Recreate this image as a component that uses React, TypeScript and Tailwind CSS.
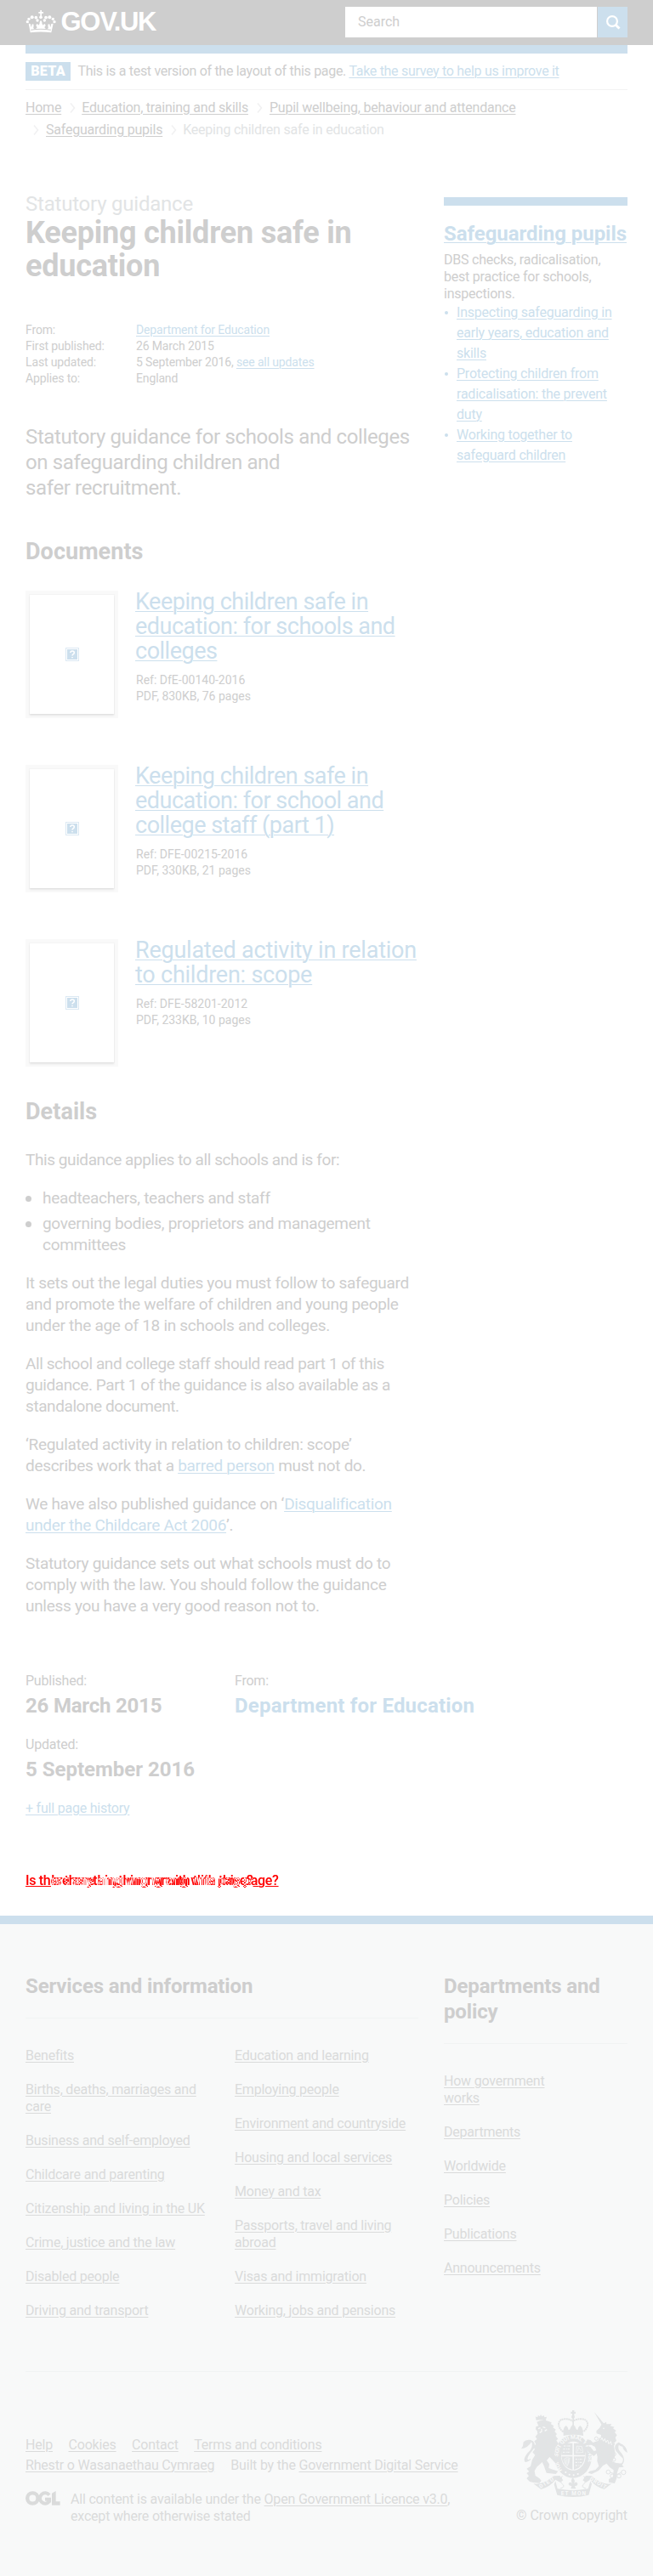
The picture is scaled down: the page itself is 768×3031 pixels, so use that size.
import type { ReactNode } from 'react';

const link = 'text-[#ccdfed] underline decoration-1 underline-offset-2';

function A({ children, className = link }: { children: ReactNode; className?: string }) {
  return (
    <a href="#" className={className}>
      {children}
    </a>
  );
}

function Lines({ lines }: { lines: ReactNode[] }) {
  return (
    <>
      {lines.map((line, i) => (
        <span key={i} className="block whitespace-nowrap">
          {line}
        </span>
      ))}
    </>
  );
}

function Crown() {
  return (
    <svg viewBox="90 36 108 80" className="h-[26.7px] w-[36px]" fill="#fff">
      <path d="M101 83 L107 84 L110 96 Q113 92 112 86 L118 85 L119 92 Q116 97 119 101 Q125 104 130 99 Q132 94 127 91 L129 85 Q134 85 136 89 Q141 84 140 78 L144 71 L148 78 Q147 84 152 89 Q154 85 159 85 L161 91 Q156 94 158 99 Q163 104 169 101 Q172 97 169 92 L170 85 L176 86 Q175 92 178 96 L181 84 L188 83 L181 115 Q144 110 107 115 Z" />
      <path d="M108 104 Q144 98 180 104 L179 107 Q144 101 109 107 Z" fill="#cecece" />
      <path d="M142 36 h5 v6 h6 v5 h-6 v12 h-5 v-12 h-6 v-5 h6 Z" />
      <circle cx="144" cy="61" r="5.5" />
      <circle cx="97" cy="77" r="5" />
      <circle cx="102" cy="67" r="5" />
      <circle cx="113" cy="61" r="6" />
      <circle cx="127" cy="62" r="5.5" />
      <circle cx="132" cy="72" r="5" />
      <circle cx="157" cy="72" r="5" />
      <circle cx="162" cy="62" r="5.5" />
      <circle cx="175" cy="61" r="6" />
      <circle cx="187" cy="67" r="5" />
      <circle cx="192" cy="77" r="5" />
    </svg>
  );
}

function Chevron({ className }: { className: string }) {
  return (
    <svg viewBox="0 0 7 12" className={`h-3 w-[7px] shrink-0 ${className}`} fill="none">
      <path d="M1 .5 L5.5 6 L1 11.5" stroke="#f1f1f2" strokeWidth="1.6" />
    </svg>
  );
}

function BrokenImage() {
  return (
    <svg viewBox="0 0 16 16" className="size-4">
      <rect x=".5" y=".5" width="15" height="15" fill="#fff" stroke="#dce9f3" />
      <rect x="2" y="2" width="12" height="12" fill="#ccdfed" />
      <path d="M5.8 6 Q6 4 8 4 Q10.300 4 10.300 6 Q10.300 7.200 9 7.800 Q8 8.300 8 9.600 M8 11 v1.300" stroke="#fff" strokeWidth="1.500" fill="none" />
    </svg>
  );
}

function Crest() {
  const bg = '#f8f9f9';
  return (
    <svg viewBox="69 78 375 306" className="h-[102px] w-[125px]" fill="#e2e4e5">
      {/* crown */}
      <path d="M249 78 h7 v5 h5 v7 h-5 v6 h-7 v-6 h-5 v-7 h5 Z" />
      <circle cx="252" cy="101" r="6" />
      <path d="M217 154 C192 134 199 109 222 109 Q240 108 251 117 Q263 108 282 109 C306 109 312 134 288 154" fill="none" stroke="#e2e4e5" strokeWidth="6" strokeDasharray="6 1.500" />
      <path d="M250 105 h5 v42 h-5 Z" />
      <path d="M216 152 l5 -14 l6 -6 l6 6 l3 10 l5 -3 l4 -10 l7 -7 l7 7 l4 10 l5 3 l3 -10 l6 -6 l6 6 l5 14 l-3 11 q-33 -8 -66 0 Z" />
      <path d="M218 160 q35 -9 70 0 v8 q-35 -7 -70 0 Z" />
      {/* garter and shield */}
      <ellipse cx="252" cy="241" rx="66" ry="76" />
      <ellipse cx="253" cy="239" rx="43" ry="51" fill={bg} />
      <path d="M216 194 h34 v42 h-39 q-1 -28 5 -42 Z M255 194 h34 q7 16 5 42 h-39 Z M211 241 h39 v47 q-35 -8 -39 -47 Z M255 241 h39 q-4 39 -39 47 Z" />
      <path d="M219 204 h25 M217 215 h27 M216 226 h28 M260 251 h28 M260 262 h25 M260 273 h20" stroke={bg} strokeWidth="3" strokeDasharray="7 4 3 2" />
      <path d="M263 228 L265 204 L283 206 L287 227 Z M268 223 l4 -14 l9 13 M220 252 q6 -10 20 -5 q-2 20 -9 28 q-10 -9 -11 -23 M226 251 v17 M231 249 v22 M236 249 v15" fill="none" stroke={bg} strokeWidth="2" />
      <path id="garter" d="M214 289 A54 65 0 1 1 292 289" fill="none" />
      <text fill={bg} className="font-[Roboto] text-[20px] font-bold">
        <textPath href="#garter" textLength="252">HONI SOIT QUI MAL Y PENSE</textPath>
      </text>
      <g fill={bg}>
        <circle cx="226" cy="297" r="3" />
        <circle cx="239" cy="305" r="3" />
        <circle cx="254" cy="307" r="3" />
        <circle cx="269" cy="303" r="3" />
      </g>
      {/* lion */}
      <path d="M122 113 l-3 -13 l7 3 l3 -7 l6 4 l3 -8 l4 8 l7 -4 l2 7 l8 -2 l-4 15 q-16 -6 -33 -3 Z" />
      <path d="M124 119 Q143 109 166 117 L176 121 L174 127 L184 133 L181 139 L191 146 L187 153 L195 162 L190 168 L199 179 L193 184 L200 196 L190 210 L186 236 L207 250 L191 266 L178 252 L169 243 L159 255 L168 268 L166 282 L183 288 L199 293 L191 303 L158 299 L149 274 L143 261 L124 278 L116 292 L119 309 L133 318 L140 326 L134 335 L112 333 L99 330 L88 319 L96 310 L88 300 L97 294 L88 284 L102 276 L108 253 L118 236 L109 226 L117 216 L111 205 L121 198 L115 187 L125 180 L119 171 L127 161 L125 151 L120 145 L121 136 L130 133 Z" />
      <path d="M129 143 l8 -3 M145 137 l9 3 M141 143 v10 l-7 4 M152 151 l8 -5" stroke={bg} strokeWidth="4" fill="none" />
      <path d="M102 253 Q78 271 80 249 Q84 235 101 219 Q116 197 99 184 L110 186 Q123 201 111 217 Q92 239 91 250 Q93 257 102 248 Z" />
      <path d="M105 190 Q93 211 69 214 Q77 205 77 190 Q86 179 105 183 Z" />
      {/* unicorn */}
      <path d="M326 83 L361 125 L353 130 Z" />
      <path d="M352 129 L369 119 L370 127 L388 126 L383 133 L398 137 L393 142 L404 150 L399 156 L407 166 L401 174 L405 185 L398 193 L374 190 L349 181 L351 165 L335 160 L334 151 L345 141 Z" />
      <circle cx="360" cy="142" r="2.500" fill={bg} />
      <path d="M337 187 Q353 183 396 204 L400 225 L399 244 L389 258 L404 264 L422 267 L431 278 L414 280 L407 300 L406 317 L399 336 L378 332 L378 321 L393 313 L395 289 L382 280 L370 266 L357 274 L342 291 L318 303 L305 299 L310 293 L331 288 L343 275 L337 257 L338 242 L335 230 L325 240 L309 227 L300 216 L301 206 L313 207 L325 222 L334 220 L329 207 L317 200 L300 201 L298 192 L302 181 L313 183 L322 192 Z" />
      <path d="M345 175 Q374 183 400 195 L395 206 Q366 191 340 187 Z" />
      <path d="M350 183 l4 -8 l5 12 l5 -9 l4 14 l6 -9 l4 14 l7 -9 l3 13" stroke={bg} strokeWidth="3" fill="none" />
      <path d="M407 265 Q431 271 428 248 Q415 236 403 221 Q393 201 412 191 L419 194 Q405 205 417 223 Q436 242 431 260 Q424 279 406 270 Z" />
      <path d="M416 194 Q440 201 444 228 Q427 218 427 206 Q418 207 409 195 Z" />
      <g fill="none" stroke="#e2e4e5" strokeWidth="3">
        <circle cx="334" cy="178" r="6" />
        <circle cx="397" cy="233" r="6" />
        <circle cx="396" cy="252" r="6" />
        <circle cx="376" cy="296" r="7" />
        <circle cx="390" cy="310" r="7" />
        <circle cx="414" cy="310" r="7" />
        <circle cx="430" cy="297" r="8" />
        <path d="M382 297 L394 301 L408 304 L422 298" />
      </g>
      {/* motto scroll */}
      <path d="M112 337 Q145 343 184 310 L205 309 L217 325 L207 333 L190 323 Q170 348 139 357 Z" />
      <path d="M388 337 Q354 343 317 310 L297 309 L286 325 L297 333 L312 323 Q331 348 362 357 Z" />
      <path d="M190 328 L197 355 Q252 366 305 355 L313 328 L318 338 L307 377 Q252 391 196 377 L185 339 Z" />
      <path d="M214 310 Q200 330 218 342 Q222 350 207 354 M290 310 Q304 330 286 342 Q282 350 297 354" fill="none" stroke="#e2e4e5" strokeWidth="3" />
      <path d="M251 316 q12 12 3 22 q9 -12 14 -1 q0 10 -10 8 l4 10 h-18 l3 -10 q-12 0 -11 -9 q6 -9 14 2 q-9 -11 1 -22 Z" />
      <g fill={bg} className="font-[Roboto] text-[19px] font-bold">
        <text x="137" y="354" transform="rotate(-31 137 354)" textLength="56">DIEU</text>
        <text x="209" y="379" textLength="88">ET MON</text>
        <text x="309" y="324" transform="rotate(30 309 324)" textLength="64">DROIT</text>
      </g>
    </svg>
  );
}

function OglLogo() {
  return (
    <svg viewBox="0 0 123 51" className="h-[17px] w-[41px]" fill="none" stroke="#dadbdb">
      <circle cx="25" cy="25.500" r="18.500" strokeWidth="13" />
      <path d="M84 14 A18.500 18.500 0 1 0 84 37 V29 H69" strokeWidth="12" />
      <path d="M93 8 L107 0 V37 H122 V50 H93 Z" fill="#dadbdb" stroke="none" />
    </svg>
  );
}

const documents = [
  {
    title: ['Keeping children safe in', 'education: for schools and', 'colleges'],
    meta: ['Ref: DfE-00140-2016', 'PDF, 830KB, 76 pages'],
    tracking: 'tracking-[-0.5px]',
  },
  {
    title: ['Keeping children safe in', 'education: for school and', 'college staff (part 1)'],
    meta: ['Ref: DFE-00215-2016', 'PDF, 330KB, 21 pages'],
    tracking: 'tracking-[-0.5px]',
  },
  {
    title: ['Regulated activity in relation', 'to children: scope'],
    meta: ['Ref: DFE-58201-2012', 'PDF, 233KB, 10 pages'],
    tracking: 'tracking-[-0.23px]',
  },
];

const related = [
  ['Inspecting safeguarding in', 'early years, education and', 'skills'],
  ['Protecting children from', 'radicalisation: the prevent', 'duty'],
  ['Working together to', 'safeguard children'],
];

const services = [
  [
    ['Benefits'],
    ['Births, deaths, marriages and', 'care'],
    ['Business and self-employed'],
    ['Childcare and parenting'],
    ['Citizenship and living in the UK'],
    ['Crime, justice and the law'],
    ['Disabled people'],
    ['Driving and transport'],
  ],
  [
    ['Education and learning'],
    ['Employing people'],
    ['Environment and countryside'],
    ['Housing and local services'],
    ['Money and tax'],
    ['Passports, travel and living', 'abroad'],
    ['Visas and immigration'],
    ['Working, jobs and pensions'],
  ],
];

const departments = [
  ['How government', 'works'],
  ['Departments'],
  ['Worldwide'],
  ['Policies'],
  ['Publications'],
  ['Announcements'],
];

function FooterList({ items, className }: { items: string[][]; className: string }) {
  return (
    <ul className={`flex flex-col gap-5 ${className}`}>
      {items.map((lines) => (
        <li key={lines[0]}>
          <A className="underline decoration-1 underline-offset-2">
            <Lines lines={lines} />
          </A>
        </li>
      ))}
    </ul>
  );
}

export default function App() {
  const plain = 'underline decoration-1 underline-offset-2';
  return (
    <div className="h-[3031px] w-[768px] overflow-hidden bg-white font-[Roboto,sans-serif] text-base leading-5 tracking-[-0.22px] text-[#cecece]">
      <header className="flex h-[53px] justify-between bg-[#cecece] pr-[30px] pl-[30px]">
        <a href="#" className="flex pt-3 text-white">
          <Crown />
          <span className="ml-[5.5px] font-['Liberation_Sans',sans-serif] text-[31px] leading-[28px] font-bold tracking-[-1.3px]">GOV.UK</span>
        </a>
        <form className="mt-2 flex h-9 gap-px">
          <label className="flex w-[296px] items-center bg-white pl-[15px] tracking-normal">Search</label>
          <button type="button" className="flex w-[35px] items-center justify-center bg-[#ccdfed]">
            <svg viewBox="0 0 18 18" className="size-[18px]" fill="none" stroke="#fff" strokeWidth="2.200">
              <circle cx="8" cy="8" r="5.900" />
              <path d="M11.800 12 L16.500 16.500" strokeWidth="3" />
            </svg>
          </button>
        </form>
      </header>

      <main className="h-[2201px] px-[30px]">
        <div className="h-2.5 bg-[#ccdfed]" />
        <div className="flex h-[43px] border-b border-[#f2f3f3] pt-2.5 whitespace-nowrap">
          <strong className="flex h-[22px] w-[53px] items-center justify-center bg-[#ccdfed] text-[16px] font-black tracking-[0.3px] text-white">BETA</strong>
          <p className="mt-[.5px] ml-[8.5px] tracking-[-0.3px]">
            This is a test version of the layout of this page. <A>Take the survey to help us improve it</A>
          </p>
        </div>

        <nav className="pt-[7.5px] leading-[26px] whitespace-nowrap">
          <div className="flex items-center">
            <A className={plain}>Home</A>
            <Chevron className="mr-[7px] ml-[10px]" />
            <A className={plain}>Education, training and skills</A>
            <Chevron className="mr-2 ml-[10px]" />
            <A className={plain}>Pupil wellbeing, behaviour and attendance</A>
          </div>
          <div className="flex items-center">
            <Chevron className="mr-2 ml-[9px]" />
            <A className={plain}>Safeguarding pupils</A>
            <Chevron className="mr-[7px] ml-[10px]" />
            <span className="text-[#e2e4e5]">Keeping children safe in education</span>
          </div>
        </nav>

        <div className="flex gap-[30px] pt-[59.5px]">
          <div className="w-[462px]">
            <p className="text-2xl leading-[30px] text-[#e2e4e5]">Statutory guidance</p>
            <h1 className="text-[36px] leading-[39px] font-bold">
              <Lines lines={['Keeping children safe in', 'education']} />
            </h1>

            <dl className="mt-[46px] grid grid-cols-[130px_1fr] text-sm leading-[19px] tracking-[-0.14px]">
              <dt>From:</dt>
              <dd><A>Department for Education</A></dd>
              <dt>First published:</dt>
              <dd>26 March 2015</dd>
              <dt>Last updated:</dt>
              <dd>5 September 2016, <A>see all updates</A></dd>
              <dt>Applies to:</dt>
              <dd>England</dd>
            </dl>

            <p className="mt-11 text-2xl leading-[30px] tracking-[-0.37px]">
              <Lines lines={['Statutory guidance for schools and colleges', 'on safeguarding children and', 'safer recruitment.']} />
            </p>
          </div>

          <aside className="w-[216px] pt-[7px]">
            <div className="h-2.5 bg-[#ccdfed]" />
            <h2 className="mt-[18px] text-2xl leading-[30px] font-bold tracking-[-0.002em] whitespace-nowrap"><A>Safeguarding pupils</A></h2>
            <p className="mt-[5.5px]">
              <Lines lines={['DBS checks, radicalisation,', 'best practice for schools,', 'inspections.']} />
            </p>
            <ul className="leading-6">
              {related.map((lines) => (
                <li key={lines[0]} className="flex text-[#ccdfed]">
                  <span className="mt-[10px] mr-[10px] ml-px size-1 shrink-0 rounded-full bg-[#ccdfed]" />
                  <A><Lines lines={lines} /></A>
                </li>
              ))}
            </ul>
          </aside>
        </div>

        <section className="w-[492px] pt-[45px]">
          <h2 className="text-[27px] leading-[30px] font-bold tracking-[0.05px]">Documents</h2>
          <div className="mt-[31px] flex h-[598px] flex-col gap-[55px]">
            {documents.map((doc) => (
              <article key={doc.meta[0]} className="flex h-[150px] shrink-0">
                <div className="h-[150px] w-[109px] shrink-0 bg-[#f9f9f9] p-[5px]">
                  <div className="flex h-[140px] w-[99px] items-center justify-center bg-white shadow-[0_2px_2px_rgba(11,12,12,0.08),0_0_0_1px_#f4f4f4]">
                    <BrokenImage />
                  </div>
                </div>
                <div className="-mt-px ml-[21px]">
                  <h3 className={`-ml-px text-[27px] leading-[29px] ${doc.tracking}`}>
                    <A><Lines lines={doc.title} /></A>
                  </h3>
                  <p className="mt-[10px] text-sm leading-[19px] tracking-[0px]">
                    <Lines lines={doc.meta} />
                  </p>
                </div>
              </article>
            ))}
          </div>
        </section>

        <section className="w-[492px] text-[19px] leading-[25px] tracking-[-0.3px]">
          <h2 className="text-[27px] leading-[30px] font-bold tracking-[0.05px]">Details</h2>
          <div className="mt-[29px] flex flex-col gap-5">
            <p className="tracking-[-0.42px]">This guidance applies to all schools and is for:</p>
            <ul className="flex flex-col gap-[5px]">
              {[['headteachers, teachers and staff'], ['governing bodies, proprietors and management', 'committees']].map((lines) => (
                <li key={lines[0]} className="flex">
                  <span className="mt-[10px] mr-[13px] size-[7px] shrink-0 rounded-full bg-[#cecece]" />
                  <span><Lines lines={lines} /></span>
                </li>
              ))}
            </ul>
            <p><Lines lines={['It sets out the legal duties you must follow to safeguard', 'and promote the welfare of children and young people', 'under the age of 18 in schools and colleges.']} /></p>
            <p className="tracking-[-0.42px]"><Lines lines={['All school and college staff should read part 1 of this', 'guidance. Part 1 of the guidance is also available as a', 'standalone document.']} /></p>
            <p><Lines lines={['‘Regulated activity in relation to children: scope’', <>describes work that a <A>barred person</A> must not do.</>]} /></p>
            <p><Lines lines={[<>We have also published guidance on ‘<A>Disqualification</A></>, <><A>under the Childcare Act 2006</A>’.</>]} /></p>
            <p><Lines lines={['Statutory guidance sets out what schools must do to', 'comply with the law. You should follow the guidance', 'unless you have a very good reason not to.']} /></p>
          </div>
        </section>

        <section className="grid grid-cols-[246px_1fr] pt-[65.5px] whitespace-nowrap">
          <div>
            <p>Published:</p>
            <p className="mt-[4.5px] text-2xl leading-[30px] font-bold tracking-[-0.2px]">26 March 2015</p>
            <p className="mt-[20.5px]">Updated:</p>
            <p className="mt-[4.5px] text-2xl leading-[30px] font-bold tracking-normal">5 September 2016</p>
            <p className="mt-[20.5px]"><A>+ full page history</A></p>
          </div>
          <div>
            <p>From:</p>
            <p className="mt-[4.5px] text-2xl leading-[30px] font-bold tracking-[0.19px] text-[#ccdfed]">Department for Education</p>
          </div>
        </section>

        <div className="relative isolate -mx-px mt-[65.5px] h-[22px] w-[310px] bg-white pl-px font-medium tracking-[-0.3px] whitespace-nowrap text-[#0ff]">
          <a href="#" className="absolute left-px mix-blend-difference underline decoration-1 underline-offset-1">Is there anything wrong with this page?</a>
          <a href="#" aria-hidden="true" className="absolute left-[31px] mix-blend-difference underline decoration-1 underline-offset-1">Is there anything wrong with this page?</a>
        </div>
      </main>

      <footer className="h-[777px] border-t-10 border-[#ccdfed] bg-[#f8f9f9] px-[30px] pt-[58px] whitespace-nowrap text-[#dadbdb]">
        <div className="flex h-[469px] gap-[30px] border-b border-[#f1f3f3]">
          <section className="w-[462px]">
            <h2 className="h-[53px] border-b border-[#f1f3f3] text-2xl leading-[30px] font-bold tracking-[-0.14px] text-[#cecece]">Services and information</h2>
            <div className="flex pt-[33.5px]">
              <FooterList items={services[0]} className="w-[246px]" />
              <FooterList items={services[1]} className="w-[216px]" />
            </div>
          </section>
          <section className="w-[216px]">
            <h2 className="h-[83px] border-b border-[#f1f3f3] text-2xl leading-[30px] font-bold tracking-[-0.14px] text-[#cecece]">
              <Lines lines={['Departments and', 'policy']} />
            </h2>
            <FooterList items={departments} className="pt-[33.5px]" />
          </section>
        </div>

        <div className="flex justify-between">
          <div className="pt-[73.5px] tracking-[-0.19px]">
            <div className="flex gap-[18.5px] leading-6">
              <A className={plain}>Help</A>
              <A className={plain}>Cookies</A>
              <A className={plain}>Contact</A>
              <A className={plain}>Terms and conditions</A>
            </div>
            <div className="flex gap-[19px] leading-6">
              <A className={plain}>Rhestr o Wasanaethau Cymraeg</A>
              <span>Built by the <A className={plain}>Government Digital Service</A></span>
            </div>
            <div className="mt-[18px] flex gap-3">
              <OglLogo />
              <p>
                <Lines lines={[<>All content is available under the <A className={plain}>Open Government Licence v3.0</A>,</>, 'except where otherwise stated']} />
              </p>
            </div>
          </div>
          <div className="flex flex-col items-end pt-[45px]">
            <Crest />
            <p className="mt-[11.5px] tracking-[-0.09px]">© Crown copyright</p>
          </div>
        </div>
      </footer>
    </div>
  );
}
